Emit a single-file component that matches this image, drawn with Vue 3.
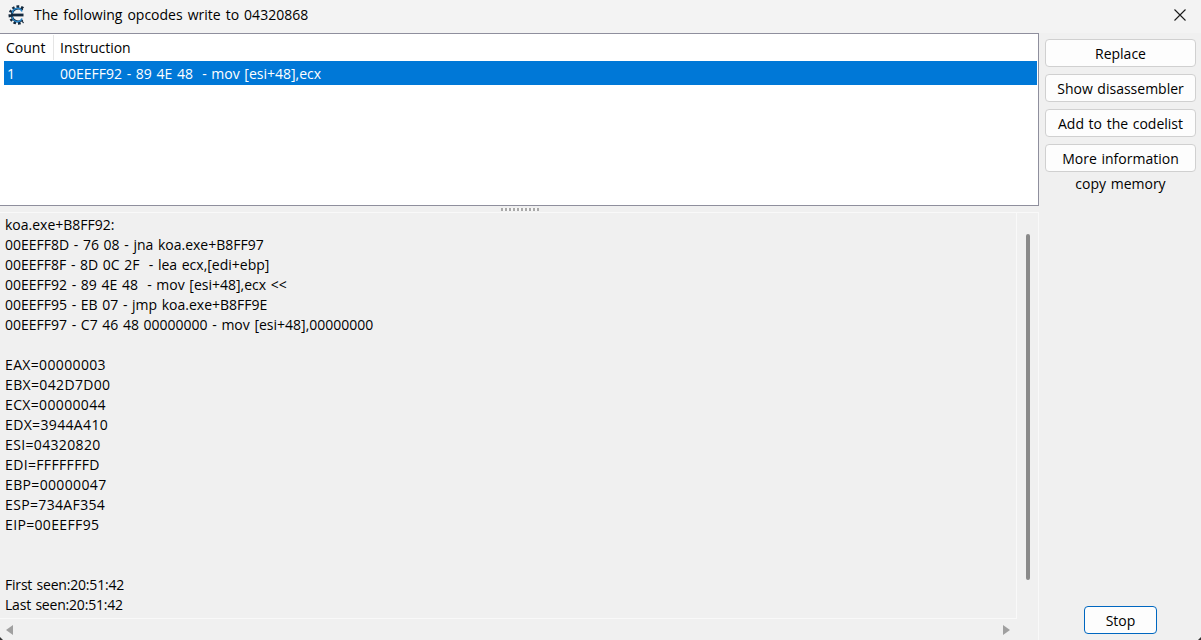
<script setup>
const buttons = ['Replace', 'Show disassembler', 'Add to the codelist', 'More information']
const selected = '00EEFF92 - 89 4E 48  - mov [esi+48],ecx'
const lines = [
  'koa.exe+B8FF92:',
  '00EEFF8D - 76 08 - jna koa.exe+B8FF97',
  '00EEFF8F - 8D 0C 2F  - lea ecx,[edi+ebp]',
  '00EEFF92 - 89 4E 48  - mov [esi+48],ecx <<',
  '00EEFF95 - EB 07 - jmp koa.exe+B8FF9E',
  '00EEFF97 - C7 46 48 00000000 - mov [esi+48],00000000',
  '',
  'EAX=00000003',
  'EBX=042D7D00',
  'ECX=00000044',
  'EDX=3944A410',
  'ESI=04320820',
  'EDI=FFFFFFFD',
  'EBP=00000047',
  'ESP=734AF354',
  'EIP=00EEFF95',
  '',
  '',
  'First seen:20:51:42',
  'Last seen:20:51:42',
]
const lineClass = (l) => ({
  reg: /^E[A-Z]{2}=/.test(l),
  seen: l.includes('seen:'),
})
</script>

<template>
  <div class="window">
    <header class="titlebar">
      <svg class="logo" width="20" height="20" viewBox="0 0 20 20">
        <path d="M16 3.6 A8 8 0 1 0 16 16.4" fill="none" stroke="#14283c" stroke-width="3.4" stroke-dasharray="2.4 1.8" />
        <path d="M15.6 4.9 A6.6 6.6 0 1 0 15.6 15.1" fill="none" stroke="#14283c" stroke-width="2" />
        <path d="M15 6.4 A5 5 0 0 0 5.4 8.6 M5.4 11.4 A5 5 0 0 0 15 13.6" fill="none" stroke="#2a86c8" stroke-width="1.4" />
        <rect x="4.5" y="8.6" width="12" height="2.8" fill="#14283c" />
      </svg>
      <span class="title">The following opcodes write to 04320868</span>
      <svg class="close" width="12" height="12" viewBox="0 0 12 12">
        <path d="M0.5 0.5 L11.5 11.5 M11.5 0.5 L0.5 11.5" stroke="#1a1a1a" stroke-width="1.1" fill="none" />
      </svg>
    </header>

    <div class="content">
      <div class="main">
        <section class="list">
          <div class="list-head">
            <span class="col-count">Count</span>
            <span class="col-instr">Instruction</span>
          </div>
          <div class="list-row">
            <span class="cell-count">1</span>
            <span class="cell-instr">{{ selected }}</span>
          </div>
        </section>

        <div class="splitter"><span class="grip"></span></div>

        <section class="memo-wrap">
          <div class="memo-top">
            <div class="memo">
              <div v-for="(l, i) in lines" :key="i" class="line" :class="lineClass(l)">{{ l }}</div>
            </div>
            <div class="vscroll"><span class="thumb"></span></div>
          </div>
          <div class="hscroll">
            <span class="arrow-left"></span>
            <span class="arrow-right"></span>
          </div>
        </section>
      </div>

      <aside class="side">
        <button v-for="b in buttons" :key="b" class="btn">{{ b }}</button>
        <div class="copy">copy memory</div>
        <button class="btn stop">Stop</button>
      </aside>
    </div>
    <span class="corner corner-l"></span>
    <span class="corner corner-r"></span>
  </div>
</template>

<style>
html, body { margin: 0; background: #f0f0f0; }
</style>

<style scoped>
.window {
  position: relative;
  width: 1201px;
  height: 640px;
  display: flex;
  flex-direction: column;
  background: #f0f0f0;
  font-family: "Open Sans", "Noto Sans", sans-serif;
  font-size: 14px;
  word-spacing: 1px;
  color: #000;
  overflow: hidden;
}
.corner { position: absolute; bottom: 0; width: 4px; height: 4px; }
.corner-l { left: 0; background: linear-gradient(45deg, #333 0 30%, transparent 45%); }
.corner-r { right: 0; background: linear-gradient(-45deg, #333 0 30%, transparent 45%); }
.titlebar {
  height: 33px;
  flex: none;
  display: flex;
  align-items: center;
  padding: 0 15px 3px 7px;
  box-sizing: border-box;
  background: #f3f3f3;
}
.logo { flex: none; }
.title { margin-left: 7px; flex: 1; white-space: pre; word-spacing: 1.4px; position: relative; top: -1px; }
.close { flex: none; }
.content { flex: 1; display: flex; min-height: 0; }
.main { width: 1039px; flex: none; display: flex; flex-direction: column; }
.list {
  height: 173px;
  box-sizing: border-box;
  background: #fff;
  border: 1px solid #8f8f9d;
  border-left: 0;
  padding-left: 4px;
  padding-right: 1px;
}
.list-head { height: 27px; display: flex; align-items: center; }
.col-count {
  width: 50px;
  height: 25px;
  line-height: 25px;
  padding-left: 2px;
  box-sizing: border-box;
  border-right: 1px solid #e5e5e5;
}
.col-instr { padding-left: 6px; line-height: 25px; height: 25px; }
.list-row {
  height: 24px;
  line-height: 25px;
  background: #0078d7;
  color: #fff;
  display: flex;
}
.cell-count { width: 56px; padding-left: 3px; box-sizing: border-box; }
.cell-instr { white-space: pre; }
.splitter { height: 6px; flex: none; display: flex; justify-content: center; align-items: flex-start; }
.grip {
  width: 38px;
  height: 3px;
  margin-top: 2px;
  background: repeating-linear-gradient(90deg, #a8a8a8 0 2px, #f7f7f7 2px 4px);
}
.memo-wrap { flex: 1; display: flex; flex-direction: column; min-height: 0; border-top: 1px solid #f9f9f9; border-right: 1px solid #f9f9f9; }
.memo-top { flex: 1; display: flex; min-height: 0; }
.memo {
  flex: 1;
  padding: 2px 0 0 5px;
  border-right: 1px solid #f9f9f9;
  border-bottom: 1px solid #f9f9f9;
  overflow: hidden;
}
.line { height: 20px; line-height: 20px; white-space: pre; }
.reg { letter-spacing: 0.35px; }
.seen { letter-spacing: -0.2px; }
.vscroll { width: 21px; flex: none; padding-top: 21px; box-sizing: border-box; display: flex; justify-content: center; }
.thumb { width: 4px; height: 346px; background: #8a8a8a; border-radius: 2px; }
.hscroll {
  height: 21px;
  flex: none;
  display: flex;
  justify-content: space-between;
  align-items: center;
  padding: 0 28px 0 6px;
}
.arrow-left { width: 0; height: 0; border-style: solid; border-width: 5px 7px 5px 0; border-color: transparent #a0a0a0 transparent transparent; }
.arrow-right { width: 0; height: 0; border-style: solid; border-width: 5px 0 5px 7px; border-color: transparent transparent transparent #a0a0a0; }
.side {
  flex: 1;
  display: flex;
  flex-direction: column;
  align-items: center;
  padding: 6px 5px 6px 6px;
  box-sizing: border-box;
}
.btn {
  width: 151px;
  height: 28px;
  flex: none;
  box-sizing: border-box;
  margin-bottom: 7px;
  padding: 0;
  background: #fdfdfd;
  border: 1px solid #d0d0d0;
  border-radius: 4px;
  font: inherit;
  word-spacing: inherit;
  color: #000;
}
.copy { margin-top: -7px; height: 24px; line-height: 24px; }
.stop {
  width: 73px;
  margin-top: auto;
  margin-bottom: 0;
  border-color: #0067c0;
}
</style>
